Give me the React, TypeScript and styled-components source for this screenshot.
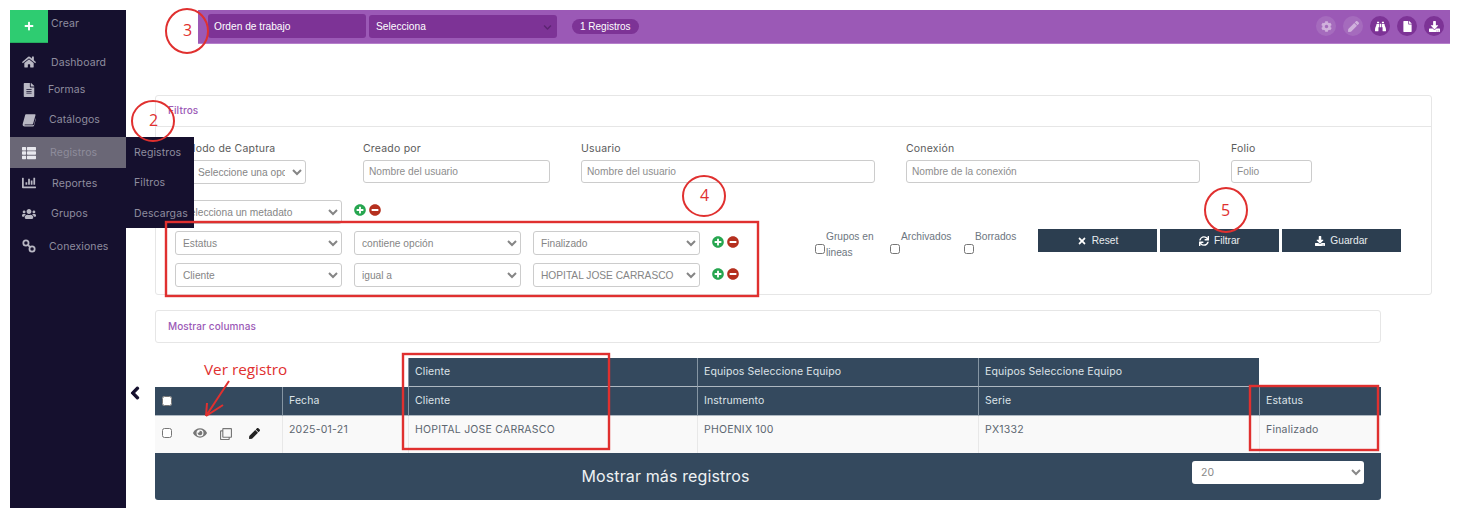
import styled, { createGlobalStyle } from "styled-components";
import {
  FaBinoculars,
  FaChartBar,
  FaChevronDown,
  FaChevronLeft,
  FaCog,
  FaDownload,
  FaEye,
  FaFile,
  FaFileAlt,
  FaHome,
  FaMinusCircle,
  FaPen,
  FaPlus,
  FaPlusCircle,
  FaRegClone,
  FaSync,
  FaThList,
  FaTimes,
  FaUsers,
} from "react-icons/fa";

const GlobalStyle = createGlobalStyle`
  html, body {
    margin: 0;
    padding: 0;
    background: #fff;
    overflow: hidden;
  }
  * {
    box-sizing: border-box;
  }
`;

const wideFont = `Inter, "Open Sans", sans-serif`;
const plainFont = `"Liberation Sans", Arial, sans-serif`;

const Page = styled.div`
  position: relative;
  display: flex;
  width: 1460px;
  height: 518px;
  padding: 10px 10px 0 10px;
  overflow: hidden;
`;

// sidebar
const Sidebar = styled.aside`
  position: relative;
  flex: 0 0 116px;
  height: 498px;
  background: #15102e;
  color: #8f8d9f;
  font-family: ${wideFont};
  font-size: 10.5px;
  letter-spacing: 0.1px;
`;

const CreateRow = styled.div`
  display: flex;
  height: 33px;
  margin-bottom: 4px;
`;

const CreateButton = styled.div`
  display: flex;
  align-items: center;
  justify-content: center;
  width: 38px;
  height: 33px;
  background: #2ecc71;
  border-bottom: 1px solid #27ae60;
  color: #fff;
  font-size: 10px;
`;

const CreateLabel = styled.span`
  margin: 7px 0 0 3px;
`;

const NavItem = styled.div<{ $height: number; $active?: boolean; $gap: number }>`
  display: flex;
  align-items: center;
  height: ${(p) => p.$height}px;
  padding-left: 12px;
  background: ${(p) => (p.$active ? "#6a6776" : "transparent")};
  color: ${(p) => (p.$active ? "#8e8c9b" : "#8f8d9f")};

  svg {
    flex: 0 0 14px;
    margin-right: ${(p) => p.$gap}px;
    color: ${(p) => (p.$active ? "#e8e8ee" : "#b9b8c4")};
    font-size: 14px;
  }
`;

const SubMenu = styled.div`
  position: absolute;
  top: 127px;
  left: 116px;
  width: 68px;
  height: 91px;
  padding-left: 8px;
  background: #15102e;
  z-index: 2;
`;

const SubItem = styled.div`
  display: flex;
  align-items: center;
  height: 30.5px;
  white-space: nowrap;
`;

// main column
const Main = styled.main`
  flex: 1;
  display: flex;
  flex-direction: column;
  min-width: 0;
`;

const TopBar = styled.header`
  display: flex;
  align-items: center;
  height: 34px;
  margin-left: 72px;
  padding: 0 6px 1px 10px;
  background: #9b59b6;
  border-bottom: 1px solid #b57fcb;
  font-family: ${plainFont};
  font-size: 10.2px;
  color: #fff;
`;

const FormName = styled.div`
  display: flex;
  align-items: center;
  width: 158px;
  height: 24px;
  padding-left: 6px;
  background: #7d3396;
  border-radius: 3px;
`;

const FormSelectWrap = styled.div`
  position: relative;
  display: flex;
  margin-left: 3px;

  svg {
    position: absolute;
    top: 8px;
    right: 5px;
    color: #5c2472;
    font-size: 9px;
    pointer-events: none;
  }
`;

const FormSelect = styled.select`
  appearance: none;
  width: 188px;
  height: 23px;
  padding: 0 7px;
  background: #7d3396;
  border: none;
  border-radius: 3px;
  color: #fff;
  font-family: ${plainFont};
  font-size: 10.2px;
`;

const CountPill = styled.div`
  display: flex;
  align-items: center;
  height: 15px;
  margin-left: 15px;
  padding: 0 8px;
  background: #7d3396;
  border-radius: 8px;
  font-size: 10px;
`;

const BarIcons = styled.div`
  display: flex;
  gap: 7px;
  margin-left: auto;
`;

const BarIcon = styled.div<{ $muted?: boolean }>`
  display: flex;
  align-items: center;
  justify-content: center;
  width: 20px;
  height: 20px;
  border-radius: 50%;
  background: ${(p) => (p.$muted ? "#a56bbd" : "#7d3396")};
  color: ${(p) => (p.$muted ? "#d0b0dc" : "#fff")};
  font-size: 11px;
`;

const Card = styled.section`
  height: 200px;
  margin: 51px 18px 0 29px;
  border: 1px solid #e6e6e6;
  border-radius: 3px;
  font-family: ${wideFont};
`;

const CardHeader = styled.div`
  display: flex;
  align-items: center;
  height: 31px;
  padding: 0 0 2px 12px;
  border-bottom: 1px solid #e6e6e6;
  color: #9b59b6;
  font-size: 10px;
  font-weight: 500;
  letter-spacing: 0.1px;
`;

const FieldRow = styled.div`
  display: flex;
  gap: 31px;
  margin: 15px 0 16px 30px;
`;

const Field = styled.div<{ $width: number }>`
  display: flex;
  flex-direction: column;
  align-items: flex-start;
  width: ${(p) => p.$width}px;
`;

const FieldLabel = styled.label`
  height: 14px;
  margin-bottom: 4px;
  color: #5b5b5b;
  font-size: 10.5px;
  letter-spacing: 0.2px;
  line-height: 14px;
  white-space: nowrap;
`;

const TextInput = styled.input`
  width: 100%;
  height: 23px;
  padding: 0 5px;
  background: #fff;
  border: 1px solid #ccc;
  border-radius: 3px;
  font-family: ${plainFont};
  font-size: 10.2px;

  &::placeholder {
    color: #8d8d8d;
    opacity: 1;
  }
`;

const GraySelect = styled.select<{ $width?: number }>`
  width: ${(p) => p.$width ?? 167}px;
  height: 24px;
  padding: 0 4px 0 3px;
  background: #fff;
  border: 1px solid #ccc;
  border-radius: 3px;
  color: #858585;
  font-family: ${plainFont};
  font-size: 10.2px;
`;

const CaptureSelect = styled(GraySelect)`
  margin-left: 4px;
`;

const FilterArea = styled.div`
  display: flex;
  padding-left: 19px;
`;

const Rules = styled.div`
  display: flex;
  flex-direction: column;
  gap: 8px;
  width: 640px;
`;

const RuleRow = styled.div<{ $tight?: boolean }>`
  display: flex;
  align-items: center;
  gap: 12px;
  margin-bottom: ${(p) => (p.$tight ? -1 : 0)}px;
`;

const RuleButtons = styled.div<{ $lift: number }>`
  display: flex;
  gap: 3px;
  margin-top: -${(p) => p.$lift}px;
  font-size: 12px;
`;

const AddIcon = styled(FaPlusCircle)`
  color: #27a650;
`;

const RemoveIcon = styled(FaMinusCircle)`
  color: #b5301f;
`;

const Options = styled.div`
  display: flex;
  width: 223px;
  height: 40px;
  margin-top: 31px;
`;

const OptionBox = styled.label<{ $width: number }>`
  display: flex;
  width: ${(p) => p.$width}px;
  color: #6d7680;
  font-family: ${plainFont};
  font-size: 10.2px;
  line-height: 16px;

  input {
    flex: 0 0 10px;
    width: 10px;
    height: 10px;
    margin: 13px 1px 0 0;
  }
`;

const OptionText = styled.span`
  width: 54px;
  margin-top: -2px;
`;

const ActionButtons = styled.div`
  display: flex;
  gap: 3px;
  margin-top: 29px;
`;

const ActionButton = styled.button`
  display: flex;
  align-items: center;
  justify-content: center;
  gap: 5px;
  width: 119px;
  height: 23px;
  padding: 0;
  background: #2c3e50;
  border: none;
  color: #e8ecef;
  font-family: ${plainFont};
  font-size: 10.2px;

  svg {
    font-size: 10px;
    color: #fff;
  }
`;

const ColumnsPanel = styled.div`
  display: flex;
  align-items: center;
  height: 33px;
  margin: 15px 69px 0 29px;
  padding: 0 0 2px 12px;
  border: 1px solid #e6e6e6;
  border-radius: 3px;
  color: #9b59b6;
  font-family: ${wideFont};
  font-size: 10px;
  font-weight: 500;
  letter-spacing: 0.1px;
`;

const TableArea = styled.div`
  display: flex;
  margin: 15px 69px 0 0;
  font-family: ${wideFont};
`;

const BackSlot = styled.div`
  flex: 0 0 29px;
  padding: 28px 0 0 2px;
  color: #15102e;
  font-size: 14px;

  svg {
    stroke: currentColor;
    stroke-width: 40px;
  }
`;

const TableBlock = styled.div`
  flex: 1;
  min-width: 0;
`;

const DataTable = styled.table`
  width: 100%;
  table-layout: fixed;
  border-collapse: separate;
  border-spacing: 0;
  font-size: 10.5px;
  letter-spacing: 0.1px;
`;

const HeadCell = styled.th<{ $blank?: boolean; $height: number }>`
  height: ${(p) => p.$height}px;
  padding: 0 0 2px 6px;
  background: ${(p) => (p.$blank ? "#fff" : "#34495e")};
  border-left: ${(p) => (p.$blank ? "none" : "1px solid #8595a3")};
  border-bottom: ${(p) => (p.$blank ? "none" : "1px solid #aeb8c1")};
  color: #dde3e8;
  font-weight: 400;
  text-align: left;
  white-space: nowrap;

  &:first-child {
    border-left: none;
    padding-left: 7px;
  }
`;

const BodyCell = styled.td`
  height: 37px;
  padding: 7px 0 0 6px;
  background: #f9f9f9;
  border-left: 1px solid #e8e8e8;
  color: #5c6670;
  letter-spacing: 0.22px;
  vertical-align: top;

  &:first-child {
    border-left: none;
    padding-left: 7px;
  }
`;

const CheckCell = styled.div`
  display: flex;
  align-items: center;
  height: 100%;
  margin-top: 2px;

  input {
    width: 10px;
    height: 10px;
    margin: 0;
  }
`;

const RowActions = styled.div`
  display: flex;
  align-items: center;
  margin-top: 2px;
  color: #777;

  input {
    width: 10px;
    height: 10px;
    margin: 0 21px 0 0;
  }
`;

const ActionIcon = styled.span<{ $gap: number; $size: number; $drop: number; $dark?: boolean }>`
  display: flex;
  margin: ${(p) => p.$drop}px ${(p) => p.$gap}px 0 0;
  color: ${(p) => (p.$dark ? "#222" : "#777")};
  font-size: ${(p) => p.$size}px;
`;

const TableFooter = styled.div`
  display: flex;
  align-items: center;
  height: 47px;
  padding-right: 17px;
  background: #34495e;
  border-radius: 0 0 3px 3px;
  color: #eef1f3;
`;

const FooterText = styled.div`
  flex: 1;
  padding: 0 16px 2px 0;
  font-size: 16px;
  letter-spacing: 0.12px;
  text-align: center;
`;

const PageSizeSelect = styled.select`
  width: 172px;
  height: 23px;
  margin-bottom: 8px;
  padding: 0 5px;
  background: #fff;
  border: none;
  border-radius: 3px;
  color: #888;
  font-family: ${wideFont};
  font-size: 10.5px;
`;

// red marks drawn on top of the screenshot
const Marks = styled.svg`
  position: absolute;
  top: 0;
  left: 0;
  z-index: 5;
  pointer-events: none;
`;

const MarkText = styled.text<{ $size: number }>`
  fill: #e0302f;
  font-family: "Open Sans", sans-serif;
  font-size: ${(p) => p.$size}px;
`;

// the slanted book of the old icon set, react-icons only has the upright one
function BookIcon() {
  return (
    <svg width={14} height={14} viewBox="0 0 16 16" fill="currentColor">
      <path d="M5 1.5h9.6c.6 0 1 .5.8 1.1l-2.7 9.8c-.1.4-.5.7-.9.7H3.6c-.8 0-1 .9-.2 1h9.4c.4 0 .7-.3.8-.6l2-7.3.4.3-2.3 8.2c-.2.6-.6.8-1.1.8H3c-1.6 0-2.6-1.2-2.2-2.8L3.4 3C3.6 2.1 4.2 1.5 5 1.5z" />
    </svg>
  );
}

function ConnectionIcon() {
  return (
    <svg width={14} height={14} viewBox="0 0 16 16" fill="none" stroke="currentColor" strokeWidth={2}>
      <circle cx={4.5} cy={4.5} r={3} />
      <circle cx={11.5} cy={11.5} r={3} />
      <path d="M6.8 6.8l2.4 2.4" />
    </svg>
  );
}

const navItems = [
  { label: "Dashboard", icon: <FaHome />, height: 30, gap: 15 },
  { label: "Formas", icon: <FaFileAlt />, height: 25, gap: 12 },
  { label: "Catálogos", icon: <BookIcon />, height: 35, gap: 13 },
  { label: "Registros", icon: <FaThList />, height: 31, gap: 14, active: true },
  { label: "Reportes", icon: <FaChartBar />, height: 30, gap: 16 },
  { label: "Grupos", icon: <FaUsers />, height: 31, gap: 15 },
  { label: "Conexiones", icon: <ConnectionIcon />, height: 34, gap: 13 },
];

const rules = [
  ["Estatus", "contiene opción", "Finalizado"],
  ["Cliente", "igual a", "HOPITAL JOSE CARRASCO"],
];

function App() {
  return (
    <Page>
      <GlobalStyle />
      <Sidebar>
        <CreateRow>
          <CreateButton>
            <FaPlus />
          </CreateButton>
          <CreateLabel>Crear</CreateLabel>
        </CreateRow>
        {navItems.map((item) => (
          <NavItem key={item.label} $height={item.height} $gap={item.gap} $active={item.active}>
            {item.icon}
            {item.label}
          </NavItem>
        ))}
        <SubMenu>
          <SubItem>Registros</SubItem>
          <SubItem>Filtros</SubItem>
          <SubItem>Descargas</SubItem>
        </SubMenu>
      </Sidebar>

      <Main>
        <TopBar>
          <FormName>Orden de trabajo</FormName>
          <FormSelectWrap>
            <FormSelect>
              <option>Selecciona</option>
            </FormSelect>
            <FaChevronDown />
          </FormSelectWrap>
          <CountPill>1 Registros</CountPill>
          <BarIcons>
            <BarIcon $muted><FaCog /></BarIcon>
            <BarIcon $muted><FaPen /></BarIcon>
            <BarIcon><FaBinoculars /></BarIcon>
            <BarIcon><FaFile /></BarIcon>
            <BarIcon><FaDownload /></BarIcon>
          </BarIcons>
        </TopBar>

        <Card>
          <CardHeader>Filtros</CardHeader>
          <FieldRow>
            <Field $width={146}>
              <FieldLabel>Modo de Captura</FieldLabel>
              <CaptureSelect $width={116}>
                <option>Seleccione una opción</option>
              </CaptureSelect>
            </Field>
            <Field $width={187}>
              <FieldLabel>Creado por</FieldLabel>
              <TextInput placeholder="Nombre del usuario" />
            </Field>
            <Field $width={294}>
              <FieldLabel>Usuario</FieldLabel>
              <TextInput placeholder="Nombre del usuario" />
            </Field>
            <Field $width={294}>
              <FieldLabel>Conexión</FieldLabel>
              <TextInput placeholder="Nombre de la conexión" />
            </Field>
            <Field $width={81}>
              <FieldLabel>Folio</FieldLabel>
              <TextInput placeholder="Folio" />
            </Field>
          </FieldRow>
          <FilterArea>
            <Rules>
              <RuleRow $tight>
                <GraySelect>
                  <option>Selecciona un metadato</option>
                </GraySelect>
                <RuleButtons $lift={4}>
                  <AddIcon />
                  <RemoveIcon />
                </RuleButtons>
              </RuleRow>
              {rules.map((rule) => (
                <RuleRow key={rule[0]}>
                  {rule.map((value) => (
                    <GraySelect key={value}>
                      <option>{value}</option>
                    </GraySelect>
                  ))}
                  <RuleButtons $lift={2}>
                    <AddIcon />
                    <RemoveIcon />
                  </RuleButtons>
                </RuleRow>
              ))}
            </Rules>
            <Options>
              <OptionBox $width={75}>
                <input type="checkbox" />
                <OptionText>Grupos en lineas</OptionText>
              </OptionBox>
              <OptionBox $width={74}>
                <input type="checkbox" />
                <OptionText>Archivados</OptionText>
              </OptionBox>
              <OptionBox $width={74}>
                <input type="checkbox" />
                <OptionText>Borrados</OptionText>
              </OptionBox>
            </Options>
            <ActionButtons>
              <ActionButton><FaTimes />Reset</ActionButton>
              <ActionButton><FaSync />Filtrar</ActionButton>
              <ActionButton><FaDownload />Guardar</ActionButton>
            </ActionButtons>
          </FilterArea>
        </Card>

        <ColumnsPanel>Mostrar columnas</ColumnsPanel>

        <TableArea>
          <BackSlot>
            <FaChevronLeft />
          </BackSlot>
          <TableBlock>
            <DataTable>
              <colgroup>
                <col width={127} />
                <col width={126} />
                <col width={289} />
                <col width={281} />
                <col width={281} />
                <col width={122} />
              </colgroup>
              <thead>
                <tr>
                  <HeadCell $blank $height={28} colSpan={2} />
                  <HeadCell $height={29}>Cliente</HeadCell>
                  <HeadCell $height={29}>Equipos Seleccione Equipo</HeadCell>
                  <HeadCell $height={29}>Equipos Seleccione Equipo</HeadCell>
                  <HeadCell $blank $height={28} />
                </tr>
                <tr>
                  <HeadCell $height={29}>
                    <CheckCell>
                      <input type="checkbox" />
                    </CheckCell>
                  </HeadCell>
                  <HeadCell $height={29}>Fecha</HeadCell>
                  <HeadCell $height={29}>Cliente</HeadCell>
                  <HeadCell $height={29}>Instrumento</HeadCell>
                  <HeadCell $height={29}>Serie</HeadCell>
                  <HeadCell $height={29}>Estatus</HeadCell>
                </tr>
              </thead>
              <tbody>
                <tr>
                  <BodyCell>
                    <RowActions>
                      <input type="checkbox" />
                      <ActionIcon $gap={13} $size={14} $drop={0}><FaEye /></ActionIcon>
                      <ActionIcon $gap={17} $size={12} $drop={3}><FaRegClone /></ActionIcon>
                      <ActionIcon $gap={0} $size={11} $drop={2} $dark><FaPen /></ActionIcon>
                    </RowActions>
                  </BodyCell>
                  <BodyCell>2025-01-21</BodyCell>
                  <BodyCell>HOPITAL JOSE CARRASCO</BodyCell>
                  <BodyCell>PHOENIX 100</BodyCell>
                  <BodyCell>PX1332</BodyCell>
                  <BodyCell>Finalizado</BodyCell>
                </tr>
              </tbody>
            </DataTable>
            <TableFooter>
              <FooterText>Mostrar más registros</FooterText>
              <PageSizeSelect>
                <option>20</option>
              </PageSizeSelect>
            </TableFooter>
          </TableBlock>
        </TableArea>
      </Main>

      <Marks width={1460} height={518} fill="none" stroke="#e0302f" strokeWidth={2}>
        <ellipse cx={187} cy={31} rx={21} ry={22} />
        <ellipse cx={153} cy={121} rx={21} ry={20} />
        <ellipse cx={704} cy={196} rx={21} ry={20} />
        <ellipse cx={1226} cy={210} rx={21} ry={22} />
        <rect x={166} y={222} width={592} height={74} strokeWidth={2.4} />
        <rect x={403} y={354} width={206} height={95} strokeWidth={2.4} />
        <rect x={1250} y={386} width={128} height={64} strokeWidth={2.4} />
        <path d="M229 381 L206 416 M206 416 L207 403 M206 416 L223 405" />
        <g stroke="none">
          <MarkText $size={16} x={183} y={36}>3</MarkText>
          <MarkText $size={16} x={149} y={126}>2</MarkText>
          <MarkText $size={16} x={700} y={201}>4</MarkText>
          <MarkText $size={16} x={1221} y={216}>5</MarkText>
          <MarkText $size={15.3} x={204} y={375}>Ver registro</MarkText>
        </g>
      </Marks>
    </Page>
  );
}

export default App;
